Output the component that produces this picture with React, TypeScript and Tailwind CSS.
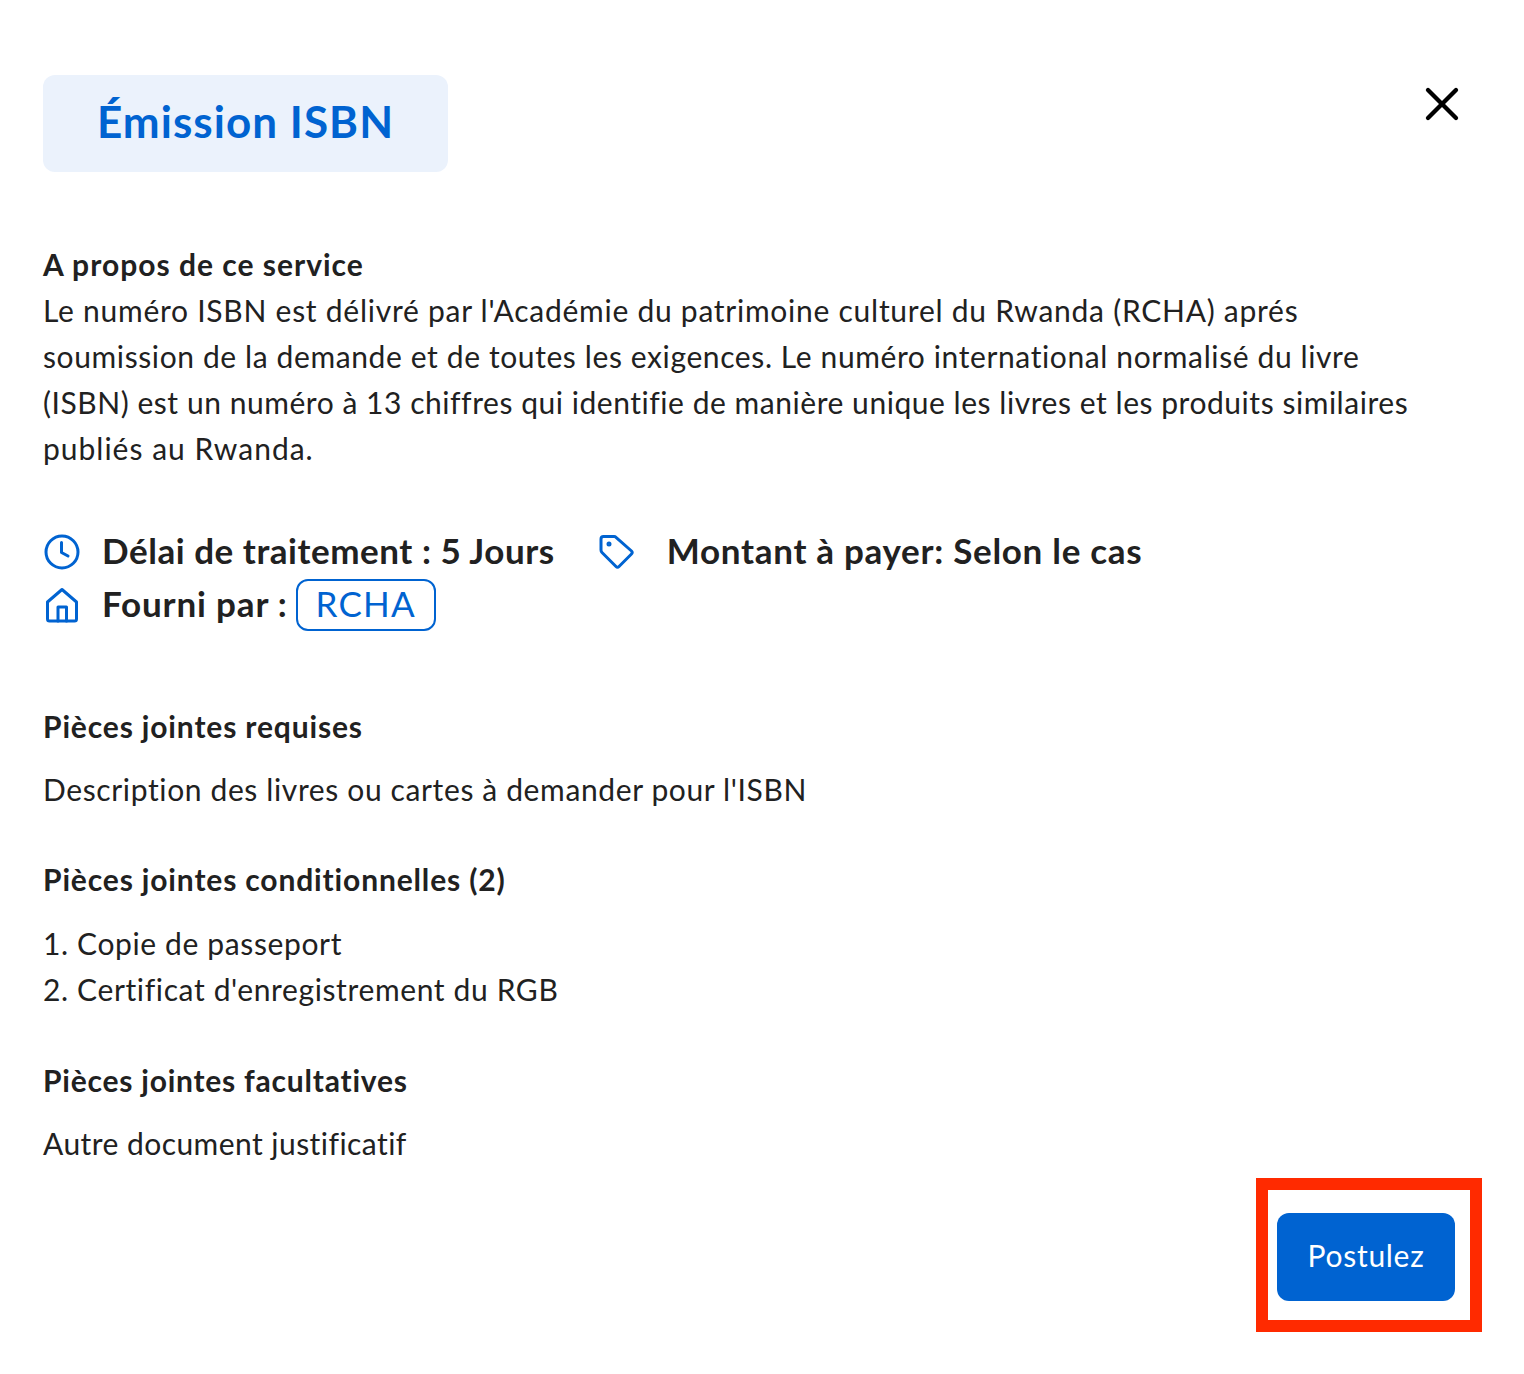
import { X } from "lucide-react";

function ClockIcon() {
  return (
    <svg className="mt-[2px]" width="38" height="38" viewBox="0 0 38 38" fill="none" stroke="#0063d1" strokeWidth="3" strokeLinecap="round" strokeLinejoin="round">
      <circle cx="19" cy="19" r="16" />
      <path d="M18.500 9.500V19.500L25 23" />
    </svg>
  );
}

function TagIcon() {
  return (
    <svg className="mt-[2px]" width="38" height="38" viewBox="0 0 38 38" fill="none" stroke="#0063d1" strokeWidth="3" strokeLinecap="round" strokeLinejoin="round">
      <path d="M3 6C3 4.500 4 3.500 5.500 3.500H16C17 3.500 17.500 3.800 18 4.300L33.500 18C34.500 19 34.500 20 33.500 21L21 33.500C20 34.500 19 34.500 18 33.500L4 19.500C3.300 18.800 3 18 3 17Z" />
      <circle cx="11" cy="11" r="1" fill="#0063d1" />
    </svg>
  );
}

function HomeIcon() {
  return (
    <svg className="mt-[2px]" width="38" height="38" viewBox="0 0 38 38" fill="none" stroke="#0063d1" strokeWidth="3" strokeLinecap="round" strokeLinejoin="round">
      <path d="M4.500 16L19 3.500L33.500 16V33C33.500 34.500 33 35 31.500 35H6.500C5 35 4.500 34.500 4.500 33Z" />
      <path d="M15 35V21H23.500V35" />
    </svg>
  );
}

export default function App() {
  return (
    <div className="h-[1374px] w-[1524px] bg-white pl-[43px] pr-[54px] pt-[75px] font-['Lato',sans-serif] text-[#212121]">
      <div className="flex items-start justify-between">
        <div className="flex h-[97px] w-[405px] items-center justify-center rounded-xl bg-[#ebf2fc] pb-[5px] text-[44px] font-bold tracking-[1.05px] text-[#0063d1]">
          Émission ISBN
        </div>
        <X size={56} strokeWidth={1.85} color="#000" className="mt-px" />
      </div>

      <div className="mt-[69px] text-[30px] leading-[46px]">
        <p className="font-bold tracking-[1px]">A propos de ce service</p>
        <p>
          <span className="block tracking-[0.74px]">Le numéro ISBN est délivré par l'Académie du patrimoine culturel du Rwanda (RCHA) aprés</span>
          <span className="block tracking-[0.61px]">soumission de la demande et de toutes les exigences. Le numéro international normalisé du livre</span>
          <span className="block tracking-[0.54px]">(ISBN) est un numéro à 13 chiffres qui identifie de manière unique les livres et les produits similaires</span>
          <span className="block tracking-[1px]">publiés au Rwanda.</span>
        </p>
      </div>

      <div className="mt-[53px] text-[35px] font-bold leading-[53px] tracking-[0.5px]">
        <div className="flex items-center">
          <ClockIcon />
          <span className="ml-[21px] tracking-[0.54px]">Délai de traitement : 5 Jours</span>
          <span className="ml-[43px]"><TagIcon /></span>
          <span className="ml-[31px] tracking-[0.7px]">Montant à payer: Selon le cas</span>
        </div>
        <div className="flex h-[53px] items-center">
          <HomeIcon />
          <span className="ml-[21px] tracking-[0.83px]">Fourni par :</span>
          <span className="ml-[8px] mt-[2px] flex h-[52px] w-[140px] items-center justify-center rounded-xl border-2 border-[#0063d1] pb-[2px] font-normal tracking-[1.25px] text-[#0063d1]">
            RCHA
          </span>
        </div>
      </div>

      <div className="mt-[73px] text-[30px] leading-[46px] tracking-[0.63px]">
        <h3 className="font-bold tracking-[0.85px]">Pièces jointes requises</h3>
        <p className="mt-[17px]">Description des livres ou cartes à demander pour l'ISBN</p>
        <h3 className="mt-[44px] font-bold tracking-[0.85px]">Pièces jointes conditionnelles (2)</h3>
        <ol className="mt-[18px]">
          <li>1. Copie de passeport</li>
          <li>2. Certificat d'enregistrement du RGB</li>
        </ol>
        <h3 className="mt-[45px] font-bold tracking-[0.77px]">Pièces jointes facultatives</h3>
        <p className="mt-[17px] tracking-[0.45px]">Autre document justificatif</p>
      </div>

      <div className="mt-[47px] flex justify-end pr-[15px]">
        <div className="relative">
          <button className="h-[88px] w-[178px] rounded-xl bg-[#0063d1] pb-[4px] text-[30px] tracking-[0.7px] text-white">Postulez</button>
          <div className="absolute -bottom-[31px] -left-[21px] -right-[27px] -top-[35px] border-[12px] border-[#ff2a00]" />
        </div>
      </div>
    </div>
  );
}
